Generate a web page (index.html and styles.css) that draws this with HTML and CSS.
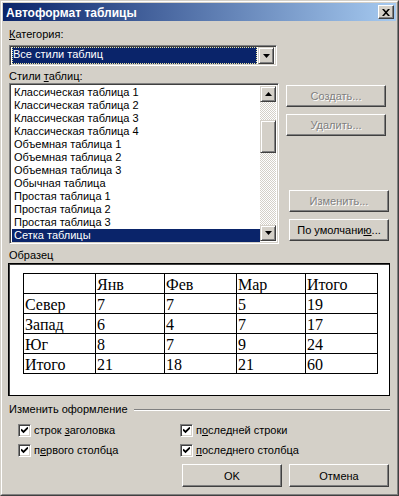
FILE: index.html
```html
<!DOCTYPE html>
<html lang="ru">
<head>
  <meta charset="UTF-8">
  <title>Автоформат таблицы</title>
  <link rel="stylesheet" href="styles.css">
</head>
<body>

  <div class="dialog">
    <div class="frame">
      <div class="titlebar">
        <span class="title">Автоформат таблицы</span>
        <span class="close">
          <svg width="8" height="7" viewBox="0 0 8 7"><path d="M0 0h2l2 2.2L6 0h2L5 3.5 8 7H6L4 4.8 2 7H0l3-3.5z" fill="#000"/></svg>
        </span>
      </div>

      <div class="content">
        <div class="label"><u>К</u>атегория:</div>
        <div class="combo sunken">
          <div class="combo-value"><span>Все стили таблиц</span></div>
          <div class="arrow-btn">
            <svg width="7" height="4" viewBox="0 0 7 4"><path d="M0 0h7L3.5 4z" fill="#000"/></svg>
          </div>
        </div>

        <div class="label">Стили <u>т</u>аблиц:</div>
        <div class="styles-row">
          <div class="listbox sunken">
            <ul class="items">
              <li>Классическая таблица 1</li>
              <li>Классическая таблица 2</li>
              <li>Классическая таблица 3</li>
              <li>Классическая таблица 4</li>
              <li>Объемная таблица 1</li>
              <li>Объемная таблица 2</li>
              <li>Объемная таблица 3</li>
              <li>Обычная таблица</li>
              <li>Простая таблица 1</li>
              <li>Простая таблица 2</li>
              <li>Простая таблица 3</li>
              <li class="selected">Сетка таблицы</li>
            </ul>
            <div class="scrollbar">
              <div class="arrow-btn">
                <svg width="7" height="4" viewBox="0 0 7 4"><path d="M0 4h7L3.5 0z" fill="#000"/></svg>
              </div>
              <div class="track"><div class="thumb"></div></div>
              <div class="arrow-btn">
                <svg width="7" height="4" viewBox="0 0 7 4"><path d="M0 0h7L3.5 4z" fill="#000"/></svg>
              </div>
            </div>
          </div>

          <div class="side-buttons">
            <button class="btn" disabled>Создать...</button>
            <button class="btn" disabled>Удалить...</button>
            <button class="btn shifted" disabled>Изменить...</button>
            <button class="btn shifted">По умолчани<u>ю</u>...</button>
          </div>
        </div>

        <div class="label sample-label">Образец</div>
        <div class="preview">
          <table class="sample">
            <colgroup>
              <col style="width: 72px">
              <col style="width: 69px">
              <col style="width: 72px">
              <col style="width: 69px">
              <col style="width: 72px">
            </colgroup>
            <tr><td></td><td>Янв</td><td>Фев</td><td>Мар</td><td>Итого</td></tr>
            <tr><td>Север</td><td>7</td><td>7</td><td>5</td><td>19</td></tr>
            <tr><td>Запад</td><td>6</td><td>4</td><td>7</td><td>17</td></tr>
            <tr><td>Юг</td><td>8</td><td>7</td><td>9</td><td>24</td></tr>
            <tr><td>Итого</td><td>21</td><td>18</td><td>21</td><td>60</td></tr>
          </table>
        </div>

        <div class="group-title"><span>Изменить оформление</span></div>
        <div class="checks">
          <label class="check"><span class="box sunken"><svg width="7" height="7" viewBox="0 0 7 7"><path d="M0 2.5l2.5 2.5L7 0.5" fill="none" stroke="#000" stroke-width="1.8"/></svg></span><span>строк <u>з</u>аголовка</span></label>
          <label class="check"><span class="box sunken"><svg width="7" height="7" viewBox="0 0 7 7"><path d="M0 2.5l2.5 2.5L7 0.5" fill="none" stroke="#000" stroke-width="1.8"/></svg></span><span>п<u>о</u>следней строки</span></label>
          <label class="check"><span class="box sunken"><svg width="7" height="7" viewBox="0 0 7 7"><path d="M0 2.5l2.5 2.5L7 0.5" fill="none" stroke="#000" stroke-width="1.8"/></svg></span><span>п<u>е</u>рвого столбца</span></label>
          <label class="check"><span class="box sunken"><svg width="7" height="7" viewBox="0 0 7 7"><path d="M0 2.5l2.5 2.5L7 0.5" fill="none" stroke="#000" stroke-width="1.8"/></svg></span><span><u>п</u>оследнего столбца</span></label>
        </div>

        <div class="actions">
          <button class="btn default">OK</button>
          <button class="btn">Отмена</button>
        </div>
      </div>
    </div>
  </div>

</body>
</html>
```

FILE: styles.css
```css
* {
  box-sizing: border-box;
  margin: 0;
  padding: 0;
}

body {
  font-family: 'Liberation Sans', Arial, sans-serif;
  font-size: 11px;
  color: #000;
  background-color: #d4d0c8;
}

u {
  text-decoration: underline;
  text-underline-offset: 1px;
}

.dialog {
  width: 399px;
  height: 496px;
  border: 1px solid;
  border-color: #d4d0c8 #404040 #404040 #d4d0c8;
}

.frame {
  height: 100%;
  border: 1px solid;
  border-color: #fff #808080 #808080 #fff;
  padding: 1px;
}

/* title bar */
.titlebar {
  height: 18px;
  display: flex;
  justify-content: space-between;
  align-items: center;
  background: linear-gradient(to right, #0a246a, #a6caf0);
  padding: 0 2px 0 3px;
}

.title {
  color: #fff;
  font-weight: bold;
  font-size: 12px;
  padding-top: 1px;
}

.close {
  width: 16px;
  height: 14px;
  display: flex;
  align-items: center;
  justify-content: center;
  background: #d4d0c8;
  border: 1px solid;
  border-color: #fff #404040 #404040 #fff;
  box-shadow: inset -1px -1px #808080;
}

/* common controls */
.sunken {
  border: 1px solid;
  border-color: #808080 #fff #fff #808080;
  box-shadow: inset 1px 1px #404040, inset -1px -1px #d4d0c8;
  background: #fff;
}

.btn {
  width: 100px;
  height: 22px;
  font-family: inherit;
  font-size: 11px;
  color: #000;
  background: #d4d0c8;
  border: 1px solid;
  border-color: #fff #404040 #404040 #fff;
  box-shadow: inset -1px -1px #808080;
}

.btn:disabled {
  color: #808080;
  text-shadow: 1px 1px 0 #fff;
}

.arrow-btn {
  width: 16px;
  height: 16px;
  display: flex;
  align-items: center;
  justify-content: center;
  background: #d4d0c8;
  border: 1px solid;
  border-color: #d4d0c8 #404040 #404040 #d4d0c8;
  box-shadow: inset 1px 1px #fff, inset -1px -1px #808080;
}

.label {
  line-height: 13px;
  margin-top: 4px;
}

.content {
  padding: 0 6px;
}

.content > .label:first-child {
  margin-top: 7px;
}

/* combo */
.combo {
  width: 268px;
  height: 21px;
  margin-top: 4px;
  display: flex;
  align-items: center;
  padding: 2px;
}

.combo-value {
  flex: 1;
  height: 17px;
  padding-right: 1px;
}

.combo-value span {
  display: block;
  height: 100%;
  line-height: 15px;
  padding-left: 1px;
  color: #fff;
  background: #0a246a;
  outline: 1px dotted #e8e4a0;
  outline-offset: -1px;
}

.combo .arrow-btn {
  height: 17px;
}

/* styles list */
.styles-row {
  display: flex;
  align-items: flex-start;
}

.listbox {
  width: 270px;
  height: 161px;
  display: flex;
  padding: 2px;
}

.items {
  list-style: none;
  flex: 1;
}

.items li {
  height: 13px;
  line-height: 13px;
  padding-left: 2px;
  white-space: nowrap;
}

.items li.selected {
  color: #fff;
  background: #0a246a;
}

.scrollbar {
  width: 16px;
  display: flex;
  flex-direction: column;
}

.track {
  flex: 1;
  background: repeating-conic-gradient(#fff 0 25%, #d4d0c8 0 50%) 0 0 / 2px 2px;
}

.thumb {
  height: 33px;
  margin-top: 18px;
  background: #d4d0c8;
  border: 1px solid;
  border-color: #d4d0c8 #404040 #404040 #d4d0c8;
  box-shadow: inset 1px 1px #fff, inset -1px -1px #808080;
}

.side-buttons {
  display: flex;
  flex-direction: column;
  margin-left: 7px;
  padding-top: 2px;
}

.side-buttons .btn + .btn {
  margin-top: 7px;
}

.side-buttons .btn.shifted {
  margin-left: 3px;
}

.side-buttons .btn:nth-child(3) {
  margin-top: 54px;
}

/* sample */
.sample-label {
  margin-top: 5px;
}

.preview {
  width: 382px;
  height: 133px;
  margin: 1px 0 0 -1px;
  background: #fff;
  border: 1px solid #000;
  box-shadow: inset 1px 1px #404040;
  padding: 9px 0 0 14px;
}

.sample {
  border-collapse: collapse;
  table-layout: fixed;
  font-family: 'Liberation Serif', 'Times New Roman', serif;
  font-size: 16px;
}

.sample td {
  border: 1px solid #000;
  height: 20px;
  line-height: 17px;
  padding: 2px 1px 0;
  vertical-align: top;
  white-space: nowrap;
}

/* group */
.group-title {
  margin-top: 7px;
  display: flex;
  align-items: center;
  line-height: 13px;
}

.group-title::after {
  content: "";
  flex: 1;
  margin-left: 6px;
  border-top: 1px solid #808080;
  border-bottom: 1px solid #fff;
}

.checks {
  display: grid;
  grid-template-columns: 162px 1fr;
  grid-auto-rows: 20px;
  margin-top: 8px;
  padding-left: 9px;
}

.check {
  display: flex;
  align-items: flex-start;
  line-height: 13px;
}

.box {
  width: 13px;
  height: 13px;
  margin-right: 3px;
  display: flex;
  align-items: center;
  justify-content: center;
}

.actions {
  display: flex;
  gap: 7px;
  padding-left: 173px;
}

.actions .btn {
  height: 23px;
}

.actions .btn.default {
  width: 100px;
}
```
